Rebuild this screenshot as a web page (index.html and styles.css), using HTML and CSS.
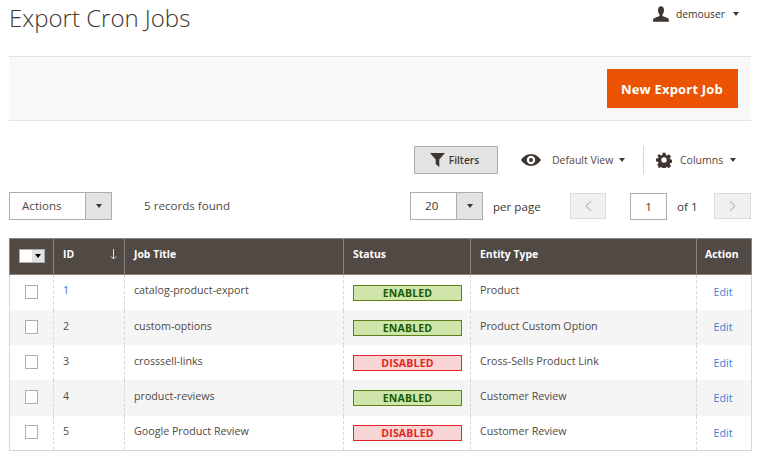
FILE: index.html
```html
<!DOCTYPE html>
<html lang="en">
<head>
<meta charset="utf-8">
<title>Export Cron Jobs</title>
<link rel="stylesheet" href="styles.css">
</head>
<body>
<header class="page-head">
  <h1 class="title">Export Cron Jobs</h1>
  <div class="user">
    <svg class="user-icon" viewBox="0 0 16 16" width="16" height="16"><path fill="#41362f" d="M5 4.200C5 1.800 6.200.3 8 .3s3 1.500 3 3.900c0 1.800-.7 3.300-1.500 4.200v1.700c1.200.7 3.800 1.300 5.800 2.500.4.300.6 1 .7 3.100H0c.1-2.100.3-2.800.7-3.100 2-1.200 4.600-1.800 5.800-2.500V8.400C5.700 7.500 5 6 5 4.200z"/></svg>
    <span class="user-name">demouser</span>
    <span class="caret user-caret"></span>
  </div>
</header>
<section class="action-bar">
  <button class="primary" type="button">New Export Job</button>
</section>
<section class="tools">
  <button class="filters" type="button">
    <svg viewBox="0 0 15 14" width="15" height="14"><path fill="#41362f" d="M0 0h15L9.300 6.500V14L5.700 11V6.500z"/></svg>
    <span>Filters</span>
  </button>
  <div class="view">
    <svg viewBox="0 0 20 12" width="20" height="12"><path fill="#41362f" fill-rule="evenodd" d="M10 0c4.300 0 7.800 2.800 10 6-2.200 3.200-5.700 6-10 6S2.200 9.200 0 6c2.200-3.200 5.700-6 10-6zm0 1.800A4.200 4.200 0 1 0 10 10.200 4.200 4.200 0 0 0 10 1.800zM10 4a2 2 0 1 1 0 4 2 2 0 0 1 0-4z"/></svg>
    <span class="view-label">Default View</span>
    <span class="caret"></span>
  </div>
  <div class="columns">
    <svg viewBox="0 0 24 24" width="16" height="16"><path fill="#41362f" fill-rule="evenodd" d="M9.500 0h5l.7 3.500 2 .9 3-2 3.500 3.500-2 3 .8 2 3.500.6v5l-3.500.7-.8 2 2 3-3.500 3.500-3-2-2 .8-.7 3.500h-5l-.7-3.500-2-.8-3 2L.8 20l2-3-.8-2L-1.500 14.500v-5L2 8.900l.8-2-2-3L4.300 2.400l3 2 2-.9zM12 7.500a4.500 4.500 0 1 0 0 9 4.500 4.500 0 0 0 0-9z" transform="translate(1.200 1.200) scale(.9)"/></svg>
    <span class="columns-label">Columns</span>
    <span class="caret"></span>
  </div>
</section>
<section class="pager-row">
  <div class="select actions-select">
    <span class="select-value">Actions</span>
    <span class="select-btn"><span class="caret"></span></span>
  </div>
  <span class="records">5 records found</span>
  <div class="pager">
    <div class="select size-select">
      <span class="select-value">20</span>
      <span class="select-btn"><span class="caret"></span></span>
    </div>
    <span class="per-page">per page</span>
    <button class="nav prev" type="button"><svg viewBox="0 0 8 12" width="8" height="12"><path fill="none" stroke="#c2c2c2" stroke-width="1.300" d="M7 1 2 6l5 5"/></svg></button>
    <span class="page-input">1</span>
    <span class="of">of 1</span>
    <button class="nav next" type="button"><svg viewBox="0 0 8 12" width="8" height="12"><path fill="none" stroke="#c2c2c2" stroke-width="1.300" d="M1 1l5 5-5 5"/></svg></button>
  </div>
</section>
<table class="grid">
  <colgroup><col class="c1"><col class="c2"><col class="c3"><col class="c4"><col class="c5"><col class="c6"></colgroup>
  <thead>
    <tr>
      <th class="check-head"><span class="mass"><span class="mass-box"></span><span class="mass-btn"><span class="caret"></span></span></span></th>
      <th><span class="id-head"><span>ID</span><svg viewBox="0 0 7 11" width="7" height="11"><path fill="none" stroke="#cfe0ff" stroke-width="1" d="M3.500 0v10M1 7.500l2.500 2.500L6 7.500"/></svg></span></th>
      <th>Job Title</th>
      <th>Status</th>
      <th>Entity Type</th>
      <th class="action-head">Action</th>
    </tr>
  </thead>
  <tbody>
    <tr class="r1">
      <td class="check"><span class="box"></span></td><td class="link">1</td><td>catalog-product-export</td>
      <td class="status"><span class="badge on">ENABLED</span></td><td>Product</td><td class="edit"><a>Edit</a></td>
    </tr>
    <tr class="r2 alt">
      <td class="check"><span class="box"></span></td><td>2</td><td>custom-options</td>
      <td class="status"><span class="badge on">ENABLED</span></td><td>Product Custom Option</td><td class="edit"><a>Edit</a></td>
    </tr>
    <tr class="r3">
      <td class="check"><span class="box"></span></td><td>3</td><td>crosssell-links</td>
      <td class="status"><span class="badge off">DISABLED</span></td><td>Cross-Sells Product Link</td><td class="edit"><a>Edit</a></td>
    </tr>
    <tr class="r4 alt">
      <td class="check"><span class="box"></span></td><td>4</td><td>product-reviews</td>
      <td class="status"><span class="badge on">ENABLED</span></td><td>Customer Review</td><td class="edit"><a>Edit</a></td>
    </tr>
    <tr class="r5">
      <td class="check"><span class="box"></span></td><td>5</td><td>Google Product Review</td>
      <td class="status"><span class="badge off">DISABLED</span></td><td>Customer Review</td><td class="edit"><a>Edit</a></td>
    </tr>
  </tbody>
</table>
</body>
</html>
```
FILE: styles.css
```css
* { box-sizing: border-box; }
html, body { margin: 0; padding: 0; background: #fff; }
body {
  width: 758px;
  height: 463px;
  overflow: hidden;
  padding: 0 7px 0 9px;
  font-family: "Open Sans", sans-serif;
  font-size: 11.6px;
  color: #41362f;
}
.page-head {
  height: 57px;
  border-bottom: 1px solid #e3e3e3;
  display: flex;
  justify-content: space-between;
  align-items: flex-start;
}
.title {
  margin: 1px 0 0;
  font-size: 24px;
  font-weight: 300;
  line-height: 33px;
  color: #41362f;
}
.user {
  display: flex;
  align-items: center;
  margin: 6px 12px 0 0;
  height: 16px;
  font-size: 10.300px;
  color: #41362f;
}
.user-name { margin-left: 7px; }
.user-caret { margin-left: 8px; }
.caret {
  display: inline-block;
  flex-shrink: 0;
  width: 0;
  height: 0;
  border-left: 3px solid transparent;
  border-right: 3px solid transparent;
  border-top: 4px solid #41362f;
}
.action-bar {
  height: 64px;
  background: #f8f8f8;
  border-bottom: 1px solid #e3e3e3;
  display: flex;
  justify-content: flex-end;
  padding: 12px 13px 0 0;
}
.primary {
  width: 131px;
  height: 39px;
  border: 0;
  padding: 0 1px 0 0;
  background: #eb5202;
  color: #fff;
  font: 700 13px "Open Sans", sans-serif;
  letter-spacing: .2px;
}
.tools {
  height: 28px;
  margin-top: 25px;
  display: flex;
  align-items: stretch;
  padding-left: 405px;
}
.filters {
  width: 84px;
  border: 1px solid #adadad;
  background: #e3e3e3;
  color: #41362f;
  font: 600 10.300px "Open Sans", sans-serif;
  display: flex;
  align-items: center;
  justify-content: center;
  gap: 4px;
  padding: 0 3px 0 0;
}
.view {
  display: flex;
  align-items: center;
  margin-left: 23px;
  width: 123px;
  font-size: 10.500px;
  color: #514943;
  white-space: nowrap;
  border-right: 1px solid #d6d6d6;
}
.view svg, .columns svg { flex-shrink: 0; }
.view-label { margin-left: 11px; }
.view .caret { margin-left: 6px; }
.columns {
  display: flex;
  align-items: center;
  margin-left: 12px;
  font-size: 10.500px;
  color: #514943;
}
.columns-label { margin-left: 8px; }
.columns .caret { margin-left: 7px; }
.pager-row {
  margin-top: 18px;
  height: 28px;
  display: flex;
  align-items: center;
}
.select {
  display: flex;
  height: 28px;
  border: 1px solid #adadad;
  background: #fff;
}
.select-value { flex: 1; line-height: 25px; }
.select-btn {
  width: 26px;
  background: #e3e3e3;
  border-left: 1px solid #adadad;
  display: flex;
  align-items: center;
  justify-content: center;
}
.actions-select { width: 103px; }
.actions-select .select-value { padding-left: 12px; color: #514943; }
.records { margin-left: 32px; margin-top: -1px; color: #514943; }
.pager {
  margin-left: auto;
  display: flex;
  align-items: center;
}
.size-select { width: 73px; }
.size-select .select-value { padding-left: 14px; }
.per-page { margin-left: 10px; width: 77px; }
.nav {
  width: 36px;
  height: 26px;
  padding: 0;
  border: 1px solid #d9d9d9;
  background: #f0f0f0;
  display: flex;
  align-items: center;
  justify-content: center;
}
.next { width: 37px; }
.page-input {
  width: 37px;
  height: 27px;
  margin-left: 24px;
  border: 1px solid #adadad;
  text-align: center;
  line-height: 25px;
}
.of { margin-left: 10px; width: 37px; }
.grid {
  margin-top: 18px;
  width: 742px;
  border-collapse: collapse;
  table-layout: fixed;
  font-size: 10.700px;
}
.c1 { width: 44px; }
.c2 { width: 71px; }
.c3 { width: 219px; }
.c4 { width: 127px; }
.c5 { width: 226px; }
.c6 { width: 55px; }
th {
  height: 36px;
  padding: 8px 9px 0;
  background: #514943;
  border: 1px solid #8a837f;
  color: #fff;
  font-size: 10.400px;
  line-height: 15px;
  font-weight: 700;
  text-align: left;
  vertical-align: top;
}
th.action-head { padding-left: 8px; }
td {
  padding: 8px 9px 0;
  color: #514943;
  border-left: 1px dashed #d6d6d6;
  border-right: 1px dashed #d6d6d6;
  vertical-align: top;
  line-height: 15px;
}
tbody td:first-child { border-left: 1px solid #d6d6d6; }
tbody td:last-child { border-right: 1px solid #d6d6d6; }
tbody tr { height: 35px; }
.r4 { height: 36px; }
tbody tr:last-child td { border-bottom: 1px solid #d6d6d6; }
.alt td { background: #f5f5f5; }
.r2 td, .r3 td, .r4 td { padding-top: 9px; }
.link { color: #2f7bd0; }
th.check-head { padding: 10px 0 0 9px; }
.mass {
  display: flex;
  width: 26px;
  height: 14px;
  border: 1px solid #adadad;
}
.mass-box { width: 12px; background: #fff; }
.mass-btn {
  flex: 1;
  background: #e3e3e3;
  display: flex;
  align-items: center;
  justify-content: center;
}
.mass .caret { border-top-color: #000; }
.id-head { display: flex; justify-content: space-between; margin-right: -2px; }
.id-head svg { margin-top: 2px; }
tbody tr td.check { padding: 10px 0 0 15px; }
tbody tr.r5 td.check { padding-top: 9px; }
.box {
  display: block;
  width: 13px;
  height: 14px;
  border: 1px solid #adadad;
  background: #fff;
}
tbody tr td.status { padding-top: 10px; }
tbody tr.r5 td.status { padding-top: 9px; }
.badge {
  display: block;
  width: 109px;
  height: 16px;
  text-align: center;
  font-size: 10.500px;
  font-weight: 700;
  line-height: 14px;
  border: 1px solid;
  letter-spacing: .2px;
}
.on { background: #d0e5a9; border-color: #5b8116; color: #185b00; }
.off { background: #f9d4d4; border-color: #e22626; color: #e22626; }
tbody tr td.edit { padding: 10px 10px 0 8px; text-align: center; }
tbody tr.r3 td.edit, tbody tr.r4 td.edit { padding-top: 11px; }
.edit a { color: #3d80d0; }
```
